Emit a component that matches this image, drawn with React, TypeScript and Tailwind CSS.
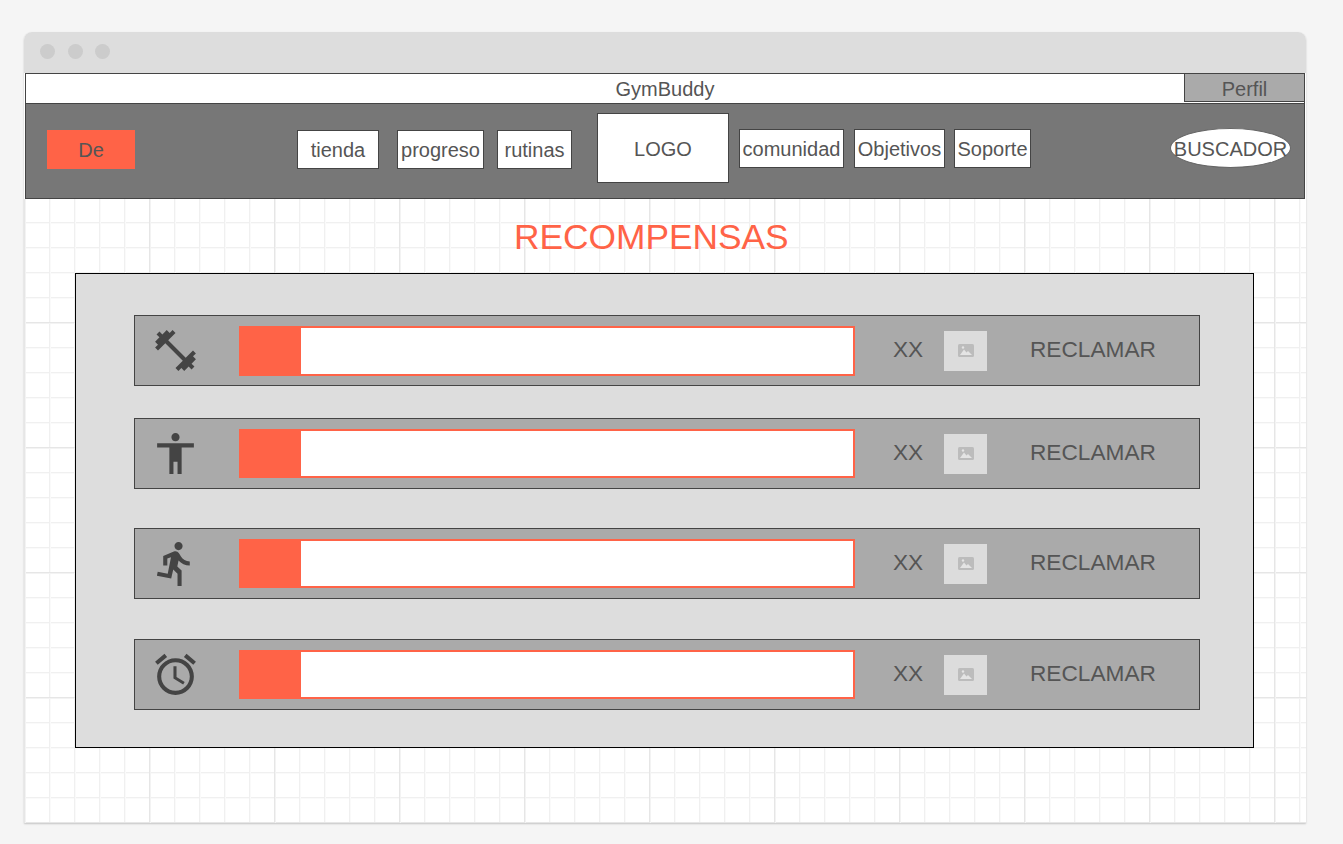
import { MdAccessAlarm, MdAccessibility, MdDirectionsRun, MdFitnessCenter } from 'react-icons/md';

const rows = [
  { Icon: MdFitnessCenter, margin: 'mt-0', bar: 'h-[50px]' },
  { Icon: MdAccessibility, margin: 'mt-[32px]', bar: 'h-[49px]' },
  { Icon: MdDirectionsRun, margin: 'mt-[39px]', bar: 'h-[49px]' },
  { Icon: MdAccessAlarm, margin: 'mt-[40px]', bar: 'h-[49px]' },
];

function NavBox({ label, className }: { label: string; className: string }) {
  return (
    <div className={`flex shrink-0 items-center justify-center border border-[#444] bg-white ${className}`}>
      {label}
    </div>
  );
}

function ImagePlaceholder() {
  return (
    <div className="ml-[21px] flex h-[40px] w-[43px] shrink-0 items-center justify-center bg-[#dcdcdc]">
      <svg width="16" height="13" viewBox="0 0 16 13">
        <rect width="16" height="13" rx="1.5" fill="#bcbcbc" />
        <path d="M2 11 L6 5.5 L8.5 8.5 L10 7 L14 11 Z" fill="#e4e4e4" />
        <circle cx="5" cy="3.5" r="1.2" fill="#e4e4e4" />
      </svg>
    </div>
  );
}

export default function App() {
  return (
    <div className="h-screen overflow-hidden bg-[#f5f5f5] pl-[24px] pt-[32px] font-['Liberation_Sans',Arial,sans-serif] text-[#555]">
      <div className="flex h-[791px] w-[1282px] flex-col rounded-t-[8px] bg-white shadow-[0_1px_2px_rgba(0,0,0,0.2)]">
        <div className="flex h-[41px] shrink-0 items-center gap-[12.5px] rounded-t-[8px] bg-[#dddddd] pb-[2px] pl-[16px]">
          <span className="h-[15px] w-[15px] rounded-full bg-[#cccccc]" />
          <span className="h-[15px] w-[15px] rounded-full bg-[#cccccc]" />
          <span className="h-[15px] w-[15px] rounded-full bg-[#cccccc]" />
        </div>

        <div className="relative ml-px flex h-[31px] w-[1280px] shrink-0 border border-[#444] bg-white text-[20px]">
          <div className="flex-1 pl-[120px] text-center leading-[30px]">GymBuddy</div>
          <div className="h-[28px] w-[120px] border-l border-b border-[#444] bg-[#aaaaaa] text-center leading-[30px]">
            Perfil
          </div>
        </div>

        <div className="ml-px -mt-px flex h-[96px] w-[1280px] shrink-0 border border-[#444] bg-[#777] text-[20px]">
          <div className="ml-[21px] mt-[26px] flex h-[39px] w-[88px] shrink-0 items-center justify-center bg-[#ff6347]">De</div>
          <NavBox label="tienda" className="ml-[162px] mt-[26px] h-[39px] w-[82px]" />
          <NavBox label="progreso" className="ml-[18px] mt-[26px] h-[39px] w-[87px]" />
          <NavBox label="rutinas" className="ml-[13px] mt-[26px] h-[39px] w-[75px]" />
          <NavBox label="LOGO" className="ml-[25px] mt-[9px] h-[70px] w-[132px] pt-[2px]" />
          <NavBox label="comunidad" className="ml-[10px] mt-[25px] h-[39px] w-[105px]" />
          <NavBox label="Objetivos" className="ml-[10px] mt-[25px] h-[39px] w-[91px]" />
          <NavBox label="Soporte" className="ml-[9px] mt-[25px] h-[39px] w-[77px]" />
          <div className="ml-[139px] mt-[24px] flex h-[40px] w-[121px] shrink-0 items-center justify-center rounded-[50%] border border-[#666] bg-white pt-[2px]">
            BUSCADOR
          </div>
        </div>

        <div className="flex-1 bg-[linear-gradient(to_right,#e6e6e6_1px,#f3f3f3_1px,#f3f3f3_2px,transparent_2px),linear-gradient(to_bottom,#e6e6e6_1px,#f3f3f3_1px,#f3f3f3_2px,transparent_2px),linear-gradient(to_right,#f0f0f0_1px,#fafafa_1px,#fafafa_2px,transparent_2px),linear-gradient(to_bottom,#f0f0f0_1px,#fafafa_1px,#fafafa_2px,transparent_2px)] bg-[size:125px_125px,125px_125px,25px_25px,25px_25px] bg-[position:0_-2px]">
          <div className="flex h-[74px] items-center pl-[490px] pt-[1px] text-[35.3px] leading-none text-[#ff6347]">
            RECOMPENSAS
          </div>

          <div className="ml-[51px] h-[475px] w-[1179px] border border-black bg-[#dddddd] pl-[58px] pt-[41px]">
            {rows.map(({ Icon, margin, bar }, i) => (
              <div key={i} className={`flex h-[71px] w-[1066px] items-center border border-[#444] bg-[#aaaaaa] text-[22.67px] ${margin}`}>
                <Icon className="ml-[16px] shrink-0 text-[#444]" size={49} />
                <div className={`ml-[39px] mt-[10px] flex w-[616px] shrink-0 self-start border-2 border-[#ff6347] bg-white ${bar}`}>
                  <div className="h-full w-[60px] bg-[#ff6347]" />
                </div>
                <span className="ml-[38px] w-[30px] shrink-0 pb-[4px]">XX</span>
                <ImagePlaceholder />
                <span className="ml-[43px] pb-[4px]">RECLAMAR</span>
              </div>
            ))}
          </div>
        </div>
      </div>
    </div>
  );
}
